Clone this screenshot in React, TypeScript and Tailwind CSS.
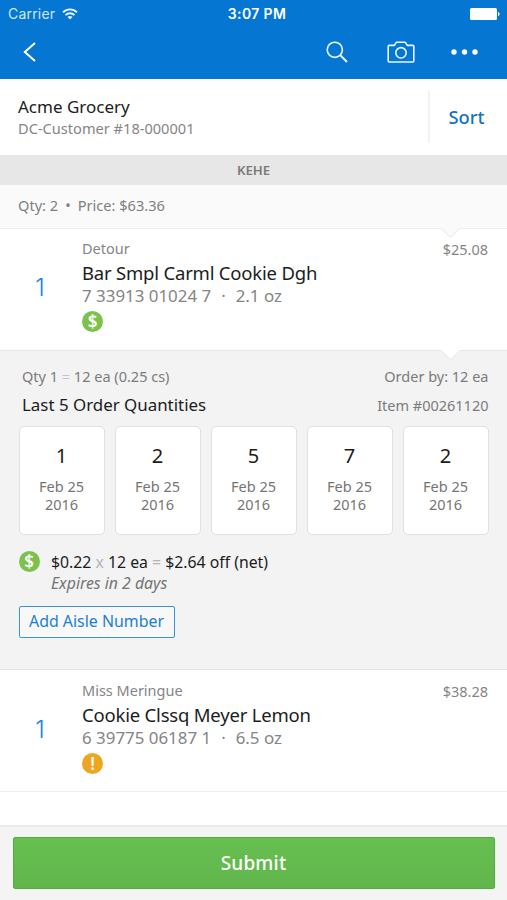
import React from 'react';
import clsx from 'clsx';

interface Product {
  id: number;
  qty: number;
  brand: string;
  name: string;
  upc: string;
  size: string;
  price: string;
  badge: 'deal' | 'warning';
}

interface PastOrder {
  id: number;
  qty: number;
  day: string;
  year: string;
}

const products: Product[] = [
  { id: 1, qty: 1, brand: 'Detour', name: 'Bar Smpl Carml Cookie Dgh', upc: '7 33913 01024 7', size: '2.1 oz', price: '$25.08', badge: 'deal' },
  { id: 2, qty: 1, brand: 'Miss Meringue', name: 'Cookie Clssq Meyer Lemon', upc: '6 39775 06187 1', size: '6.5 oz', price: '$38.28', badge: 'warning' },
];

const pastOrders: PastOrder[] = [1, 2, 5, 7, 2].map((qty, id) => ({ id, qty, day: 'Feb 25', year: '2016' }));

function Badge({ type }: { type: Product['badge'] }) {
  return (
    <span
      className={clsx(
        'flex h-[21px] w-[21px] shrink-0 items-center justify-center rounded-full pb-px leading-none text-white',
        type === 'deal' ? 'bg-[#7cc24a] text-[17px] font-semibold' : 'bg-[#eea51f] text-[17px] font-semibold'
      )}
    >
      {type === 'deal' ? '$' : '!'}
    </span>
  );
}

function Notch({ className }: { className: string }) {
  return (
    <svg className={clsx('absolute -top-px left-[440px] h-[11px] w-[21px]', className)} viewBox="0 0 21 11">
      <path d="M0 0L1.5 1L10.5 9.5L19.5 1L21 0Z" fill="currentColor" />
      <path d="M0.5 0.5L1.5 1L10.5 9.5L19.5 1L20.5 0.5" fill="none" stroke="#e6e6e6" />
    </svg>
  );
}

function StatusBar() {
  return (
    <div className="flex h-[27px] items-center font-['Inter'] text-[14px] text-white">
      <div className="flex flex-1 items-center gap-[7px] pl-[8px]">
        <span className="tracking-[0.2px] text-[#cfe8ff]">Carrier</span>
        <svg className="h-[12px] w-[16px]" viewBox="0 0 16 12" fill="none" stroke="#e6f4ff" strokeWidth="1.9">
          <path d="M1 4.4C5 .4 11 .4 15 4.4" />
          <path d="M3.5 7.1C6 4.6 10 4.6 12.5 7.1" />
          <path d="M8 11.4L5.5 9C7 7.6 9 7.6 10.5 9Z" fill="#e6f4ff" stroke="none" />
        </svg>
      </div>
      <span className="relative left-[3px] font-semibold tracking-[0.35px]">3:07 PM</span>
      <div className="flex flex-1 justify-end pr-[7px]">
        <svg className="h-[12px] w-[30px]" viewBox="0 0 30 12" fill="white">
          <rect width="27" height="12" rx="1.5" />
          <path d="M28 4C30 4.5 30 7.5 28 8Z" />
        </svg>
      </div>
    </div>
  );
}

function NavBar() {
  return (
    <div className="flex h-[50px] items-center pl-[23px] pr-[29.5px] text-[#e9f6ff]">
      <button>
        <svg className="h-[20px] w-[14px]" viewBox="0 0 14 20" fill="none" stroke="white" strokeWidth="2">
          <path d="M12 1L1.8 10L12 19" />
        </svg>
      </button>
      <div className="ml-auto flex items-center">
        <svg className="h-[22px] w-[22px]" viewBox="0 0 22 22" fill="none" stroke="currentColor" strokeWidth="1.6">
          <circle cx="8.8" cy="8.8" r="7.6" />
          <path d="M14.3 14.3L21 21" strokeWidth="2" />
        </svg>
        <svg className="ml-[38.5px] h-[22px] w-[28px]" viewBox="0 0 28 22" fill="none" stroke="currentColor" strokeWidth="1.6" strokeLinejoin="round">
          <path d="M2.2 4.4H7.4L9.4 1.2H18.2L20.2 4.4H25.8Q26.8 4.4 26.8 5.4V20Q26.8 21 25.8 21H2.2Q1.2 21 1.2 20V5.4Q1.2 4.4 2.2 4.4Z" />
          <circle cx="14" cy="11.8" r="5.2" />
        </svg>
        <svg className="ml-[36px] h-[6px] w-[27px]" viewBox="0 0 27 6" fill="white">
          <circle cx="3" cy="3" r="2.7" />
          <circle cx="13.5" cy="3" r="2.7" />
          <circle cx="24" cy="3" r="2.7" />
        </svg>
      </div>
    </div>
  );
}

function ProductRow({ product }: { product: Product }) {
  return (
    <div className="flex h-[121px] pr-[19px] pt-[10px] text-[#858585]">
      <div className="w-[80px] pt-[33px] text-center font-['Inter'] text-[24px] font-light leading-[32px] text-[#1585ee]">
        {product.qty}
      </div>
      <div className="flex-1 pl-[2px]">
        <div className="-mt-px text-[14.5px] leading-[20px]">{product.brand}</div>
        <div className="mt-px text-[18.5px] leading-[27px] tracking-[-0.2px] text-[#1c1c1c]">{product.name}</div>
        <div className="text-[16.9px] leading-[20px]">
          {product.upc}
          <span className="mx-[10px]">·</span>
          {product.size}
        </div>
        <div className="mt-[5px]">
          <Badge type={product.badge} />
        </div>
      </div>
      <div className="text-[14.5px] leading-[20px]">{product.price}</div>
    </div>
  );
}

function ProductDetails() {
  return (
    <div className="relative h-[320px] border-y border-[#e6e6e6] bg-[#f3f3f3] px-[18.5px] pt-[15px]">
      <Notch className="text-white" />
      <div className="flex justify-between pl-[3.5px] text-[14.5px] leading-[20px] text-[#7b7b7b]">
        <span>Qty 1 <span className="text-[#c4c4c4]">=</span> 12 ea (0.25 cs)</span>
        <span>Order by: 12 ea</span>
      </div>
      <div className="mt-[7px] flex justify-between pl-[3.5px] leading-[24px]">
        <span className="text-[16.9px] text-[#1c1c1c]">Last 5 Order Quantities</span>
        <span className="text-[14.5px] text-[#7b7b7b]">Item #00261120</span>
      </div>
      <div className="mt-[9px] grid grid-cols-5 gap-[10px]">
        {pastOrders.map((order) => (
          <div key={order.id} className="h-[109px] rounded-[5px] border border-[#e0e0e0] bg-white pt-[15px] text-center">
            <div className="text-[20px] leading-[28px] text-[#1c1c1c]">{order.qty}</div>
            <div className="mt-[7px] text-[14.5px] leading-[18px] text-[#757575]">
              {order.day}
              <br />
              {order.year}
            </div>
          </div>
        ))}
      </div>
      <div className="mt-[16px] flex gap-[11.5px]">
        <Badge type="deal" />
        <div>
          <div className="text-[15.8px] leading-[22px] text-[#1c1c1c]">
            $0.22 <span className="text-[#b5b5b5]">x</span> 12 ea <span className="text-[#b5b5b5]">=</span> $2.64 off (net)
          </div>
          <div className="text-[15.8px] italic leading-[20px] text-[#757575]">Expires in 2 days</div>
        </div>
      </div>
      <button className="mt-[13px] h-[32px] w-[156px] rounded-[2px] border-[1.5px] border-[#3b93df] bg-[#f8f8f8] text-[15.9px] leading-none text-[#1b7fd4]">
        Add Aisle Number
      </button>
    </div>
  );
}

export default function App() {
  return (
    <div className="flex h-[900px] w-[507px] flex-col overflow-hidden whitespace-nowrap bg-white font-['Noto_Sans',sans-serif]">
      <header className="h-[79px] bg-[#0676d3]">
        <StatusBar />
        <NavBar />
      </header>

      <div className="flex h-[76px] items-center">
        <div className="flex-1 pb-px pl-[18px]">
          <div className="text-[17px] leading-[23px] text-[#1c1c1c]">Acme Grocery</div>
          <div className="text-[14.6px] leading-[20px] text-[#858585]">DC-Customer #18-000001</div>
        </div>
        <button className="h-[52px] w-[79px] border-l-2 border-[#f2f2f2] pr-1 text-[18.3px] font-medium text-[#1273c4]">Sort</button>
      </div>

      <div className="flex h-[30px] items-center justify-center bg-[#e7e7e7] pt-px text-[13.2px] font-semibold text-[#7a7a7a]">KEHE</div>

      <div className="flex h-[43px] items-center bg-[#fafafa] pb-px pl-[18px] text-[14.6px] text-[#7f7f7f]">
        Qty: 2<span className="mx-[7px]">•</span>Price: $63.36
      </div>

      <div className="relative border-t border-[#eeeeee]">
        <Notch className="text-[#fafafa]" />
        <ProductRow product={products[0]} />
      </div>
      <ProductDetails />
      <div className="h-[122px] border-b border-[#eeeeee] pt-px">
        <ProductRow product={products[1]} />
      </div>

      <footer className="mt-auto h-[75px] border-t-2 border-[#e9e9e9] bg-[#f4f4f4] px-[12.5px] pt-[10px]">
        <button className="h-[52px] w-full rounded-[2px] border border-[#57ab46] bg-linear-to-b from-[#67bf50] to-[#61b64b] text-[19px] font-medium tracking-[0.2px] text-white">
          Submit
        </button>
      </footer>
    </div>
  );
}
